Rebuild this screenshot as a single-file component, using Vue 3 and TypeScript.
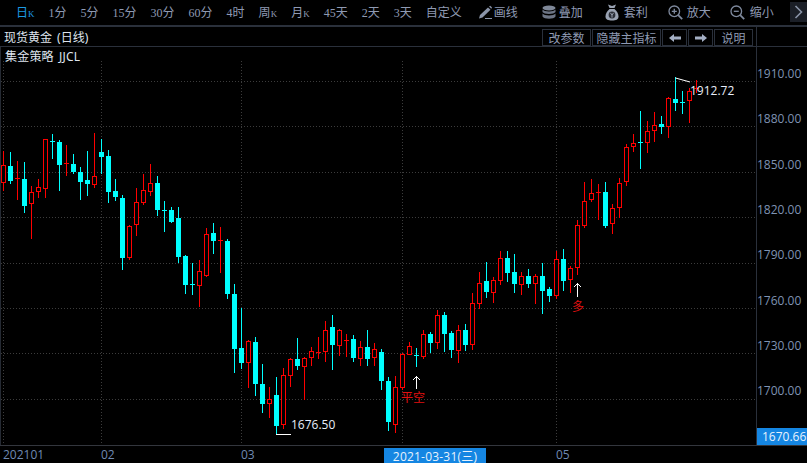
<script setup lang="ts">
// [isUp, high, bodyTop, bodyBottom, low], in chart pixels, oldest first
type Candle = [number, number, number, number, number];

const candles: Candle[] = [
  [1, 151, 165, 182, 191], [0, 152, 166, 180, 184], [1, 161, 178, 178, 200], [0, 162, 179, 205, 213],
  [1, 186, 192, 203, 239], [1, 179, 187, 191, 198], [1, 139, 139, 188, 198], [0, 134, 141, 141, 159],
  [0, 140, 142, 164, 191], [1, 145, 163, 163, 176], [0, 154, 164, 171, 174], [0, 167, 172, 181, 200],
  [0, 151, 180, 183, 196], [1, 133, 176, 184, 188], [0, 139, 152, 156, 174], [0, 150, 156, 191, 203],
  [0, 179, 191, 196, 201], [0, 195, 198, 257, 270], [1, 225, 226, 257, 260], [1, 188, 202, 224, 236],
  [1, 174, 190, 202, 205], [1, 164, 183, 191, 196], [0, 176, 183, 209, 216], [0, 201, 210, 210, 232],
  [0, 207, 210, 221, 223], [0, 207, 218, 256, 263], [0, 255, 256, 284, 294], [0, 263, 284, 284, 295],
  [1, 260, 271, 285, 307], [1, 228, 234, 275, 277], [0, 223, 233, 240, 254], [1, 227, 240, 240, 273],
  [0, 239, 241, 293, 299], [0, 284, 294, 348, 373], [0, 308, 348, 362, 369], [1, 340, 341, 362, 388],
  [0, 337, 342, 383, 396], [0, 364, 384, 403, 413], [1, 387, 399, 403, 418], [0, 377, 395, 425, 434],
  [1, 368, 375, 424, 429], [1, 358, 359, 375, 387], [0, 338, 359, 365, 370], [1, 357, 358, 366, 400],
  [1, 347, 351, 357, 366], [1, 337, 352, 352, 359], [1, 321, 330, 351, 362], [0, 315, 327, 344, 370],
  [1, 329, 330, 345, 356], [1, 334, 340, 340, 357], [0, 335, 339, 357, 362], [1, 341, 347, 358, 366],
  [0, 330, 347, 358, 366], [1, 343, 349, 357, 366], [0, 349, 352, 380, 390], [0, 377, 381, 421, 431],
  [1, 376, 387, 424, 433], [1, 353, 354, 387, 390], [1, 342, 346, 354, 354], [0, 348, 355, 355, 367],
  [1, 330, 334, 356, 359], [0, 332, 334, 342, 353], [1, 310, 315, 342, 349], [0, 312, 315, 333, 352],
  [0, 331, 333, 349, 358], [1, 325, 330, 350, 363], [0, 324, 330, 344, 351], [1, 293, 303, 344, 350],
  [1, 272, 283, 303, 309], [0, 262, 281, 291, 298], [1, 277, 280, 292, 303], [1, 251, 258, 280, 285],
  [0, 251, 258, 272, 282], [0, 254, 272, 283, 293], [1, 272, 276, 284, 295], [0, 269, 276, 283, 288],
  [1, 274, 276, 283, 304], [0, 263, 276, 290, 314], [0, 287, 289, 295, 302], [1, 251, 259, 295, 299],
  [0, 249, 259, 280, 291], [1, 266, 268, 279, 293], [1, 220, 225, 267, 275], [1, 182, 201, 225, 228],
  [1, 179, 193, 199, 202], [1, 184, 192, 192, 220], [0, 182, 192, 225, 228], [1, 204, 208, 223, 234],
  [1, 178, 183, 207, 218], [1, 144, 147, 181, 186], [1, 134, 143, 146, 152], [0, 111, 142, 142, 169],
  [1, 121, 131, 142, 153], [1, 112, 125, 130, 142], [0, 116, 124, 126, 134], [1, 97, 98, 126, 138],
  [0, 77, 99, 102, 111], [0, 91, 102, 102, 114], [1, 88, 91, 100, 123], [1, 80, 88, 88, 93],
];

const gridY = [81, 126, 172, 217, 263, 308, 353, 399];
const gridX = [3, 101, 241, 402, 556];
const prices = ['1910.00', '1880.00', '1850.00', '1820.00', '1790.00', '1760.00', '1730.00', '1700.00'];
const periodsA = ['1分', '5分', '15分', '30分', '60分', '4时'];
const periodsB = ['45天', '2天', '3天', '自定义'];
const months = [
  { label: '202101', left: 3 },
  { label: '02', left: 101 },
  { label: '03', left: 241 },
  { label: '05', left: 556 },
];
</script>

<template>
  <div class="screen">
    <div class="toolbar">
      <span class="period active">日<span class="k">K</span></span>
      <span v-for="p in periodsA" :key="p" class="period">{{ p }}</span>
      <span class="period">周<span class="k">K</span></span>
      <span class="period">月<span class="k">K</span></span>
      <span v-for="p in periodsB" :key="p" class="period">{{ p }}</span>

      <span class="tool tool-draw">
        <svg width="15" height="15" viewBox="0 0 15 15">
          <path d="M1 13.5 L2 10 L10 2.5 L12.5 4.8 L4.5 12.4 Z" fill="#8a94a8" />
          <path d="M11 1.5 L12.2 0.8 L14 2.6 L13.3 3.8 Z" fill="#8a94a8" />
          <rect x="7" y="13" width="7" height="1" fill="#8a94a8" />
        </svg>
        画线
      </span>
      <span class="tool tool-stack">
        <svg width="14" height="15" viewBox="0 0 14 15">
          <ellipse cx="7" cy="3" rx="6.5" ry="2.6" fill="#7f8898" />
          <path d="M0.5 4.5 C2 7 12 7 13.5 4.5 V7 C12 9.5 2 9.5 0.5 7 Z" fill="#6d7585" />
          <path d="M0.5 8.5 C2 11 12 11 13.5 8.5 V11.5 C12 14.5 2 14.5 0.5 11.5 Z" fill="#6d7585" />
        </svg>
        叠加
      </span>
      <span class="tool tool-bag">
        <svg width="14" height="17" viewBox="0 0 14 17">
          <path d="M3 0.5 L7 2 L11 0.5 L9.5 4 H4.5 Z" fill="#9aa3b3" />
          <path d="M4.5 5 H9.5 C12 7 13.5 10 13.5 12.5 C13.5 15.5 11 16.5 7 16.5 C3 16.5 0.5 15.5 0.5 12.5 C0.5 10 2 7 4.5 5 Z" fill="#9aa3b3" />
          <circle cx="7" cy="11" r="3.4" fill="#2b2f38" />
          <path d="M5.4 8.8 L7 11 L8.6 8.8 M7 11 V13.6" stroke="#9aa3b3" stroke-width="1" fill="none" />
        </svg>
        套利
      </span>
      <span class="tool tool-in">
        <svg width="15" height="15" viewBox="0 0 15 15" fill="none" stroke="#7f8a9e" stroke-width="1.3">
          <circle cx="6.3" cy="6.3" r="5.3" />
          <path d="M10.2 10.2 L14.2 14.2" stroke-width="1.8" />
          <path d="M3.8 6.3 H8.8 M6.3 3.8 V8.8" />
        </svg>
        放大
      </span>
      <span class="tool tool-out">
        <svg width="15" height="15" viewBox="0 0 15 15" fill="none" stroke="#7f8a9e" stroke-width="1.3">
          <circle cx="6.3" cy="6.3" r="5.3" />
          <path d="M10.2 10.2 L14.2 14.2" stroke-width="1.8" />
          <path d="M3.8 6.3 H8.8" />
        </svg>
        缩小
      </span>
      <span class="more">
        <svg width="9" height="14" viewBox="0 0 9 14" fill="none" stroke="#8a94a8" stroke-width="1.6">
          <path d="M1.5 1 L7.5 7 L1.5 13" />
        </svg>
      </span>
    </div>

    <div class="title-row">
      <div class="title-main">
        <span class="title">现货黄金 (日线)</span>
        <div class="btn-group">
          <span class="btn btn-param">改参数</span>
          <span class="btn btn-hide">隐藏主指标</span>
          <span class="btn btn-arrow">
            <svg width="12" height="8" viewBox="0 0 12 8"><path d="M0 4 L5 0 V2.5 H12 V5.5 H5 V8 Z" fill="#a4afc4" /></svg>
          </span>
          <span class="btn btn-arrow">
            <svg width="12" height="8" viewBox="0 0 12 8"><path d="M12 4 L7 0 V2.5 H0 V5.5 H7 V8 Z" fill="#a4afc4" /></svg>
          </span>
          <span class="btn btn-help">说明</span>
        </div>
      </div>
      <div class="title-side"></div>
    </div>

    <div class="main">
      <div class="chart">
        <div class="indicator">集金策略 JJCL</div>
        <svg class="plot" width="756" height="398" viewBox="0 47 756 398">
          <line
            v-for="y in gridY"
            :key="'h' + y"
            x1="1"
            x2="756"
            :y1="y + 0.5"
            :y2="y + 0.5"
            class="grid"
          />
          <line
            v-for="x in gridX"
            :key="'v' + x"
            :x1="x + 0.5"
            :x2="x + 0.5"
            y1="61"
            y2="445"
            class="grid"
          />

          <g v-for="(c, i) in candles" :key="i" :class="c[0] ? 'up' : 'down'">
            <rect class="wick" :x="3 + 7 * i" :y="c[1]" width="1" :height="c[4] - c[1]" />
            <rect
              v-if="c[2] === c[3]"
              class="wick"
              :x="1 + 7 * i"
              :y="c[2]"
              width="5"
              height="1"
            />
            <rect
              v-else-if="c[0]"
              class="hollow"
              :x="1.5 + 7 * i"
              :y="c[2] + 0.5"
              width="4"
              :height="c[3] - c[2]"
            />
            <rect
              v-else
              class="wick"
              :x="1 + 7 * i"
              :y="c[2]"
              width="5"
              :height="c[3] - c[2] + 1"
            />
          </g>

          <path class="mark" d="M276 434.5 H291" />
          <path class="mark thin" d="M675.5 78 L690 82" />
          <text class="value" x="291" y="429">1676.50</text>
          <text class="value" x="690" y="95">1912.72</text>

          <path class="mark" d="M416.5 389 V376.5 M412.5 380.5 L416.5 376.5 L420.5 380.5" />
          <text class="signal" x="401" y="402">平空</text>
          <path class="mark" d="M577.5 297 V283.5 M573.5 287.5 L577.5 283.5 L581.5 287.5" />
          <text class="signal" x="572" y="311">多</text>
        </svg>
      </div>
      <div class="axis">
        <span v-for="p in prices" :key="p" class="price">{{ p }}</span>
        <span class="last-price">1670.66</span>
      </div>
    </div>

    <div class="timeline">
      <span v-for="m in months" :key="m.label" class="month" :style="{ left: m.left + 'px' }">{{ m.label }}</span>
      <span class="cursor-date">2021-03-31(三)</span>
    </div>
  </div>
</template>

<style>
html,
body {
  margin: 0;
  background: #000;
}
</style>

<style scoped>
.screen {
  width: 807px;
  height: 463px;
  overflow: hidden;
  display: flex;
  flex-direction: column;
  background: #000;
  font-family: "Liberation Serif", "Noto Sans CJK SC", serif;
  font-size: 12px;
  color: #8f9ab3;
}

.toolbar {
  height: 24px;
  flex: none;
  display: flex;
  align-items: center;
  gap: 14px;
  padding-left: 16px;
  padding-bottom: 1px;
  border-bottom: 2px solid #2a303b;
}

.period {
  white-space: nowrap;
}

.period .k {
  font-size: 9px;
}

.period.active {
  color: #1c9ae6;
}

.tool {
  display: flex;
  align-items: center;
  gap: 3px;
  white-space: nowrap;
}

.tool-draw {
  margin-left: 2px;
  gap: 1px;
}

.tool-stack {
  margin-left: 10px;
}

.tool-bag {
  margin-left: 8px;
  gap: 5px;
}

.tool-in {
  margin-left: 6px;
  gap: 4px;
}

.tool-out {
  margin-left: 5px;
  gap: 5px;
}

.more {
  width: 18px;
  height: 20px;
  margin-left: 2px;
  display: flex;
  align-items: center;
  justify-content: center;
  background: #1b1f27;
}

.title-row {
  height: 19px;
  flex: none;
  display: flex;
  border-bottom: 1px solid #2a303b;
}

.title-main {
  width: 756px;
  display: flex;
  align-items: center;
  justify-content: space-between;
  padding-left: 4px;
  padding-right: 3px;
  box-sizing: border-box;
}

.title {
  padding-top: 1px;
  word-spacing: 2px;
  color: #dfe4ee;
  font-family: "Noto Sans", "Noto Sans CJK SC", sans-serif;
}

.btn-group {
  display: flex;
  height: 17px;
  margin-top: 2px;
  gap: 1px;
}

.btn {
  box-sizing: border-box;
  height: 17px;
  display: flex;
  align-items: center;
  justify-content: center;
  border: 1px solid #2a303b;
  color: #8f9ab3;
}

.btn-param {
  width: 49px;
}

.btn-hide {
  width: 69px;
}

.btn-arrow {
  width: 25px;
}

.btn-help {
  width: 39px;
}

.title-side {
  flex: 1;
  border-left: 1px solid #2a303b;
}

.main {
  height: 398px;
  flex: none;
  display: flex;
  border-bottom: 1px solid #33363d;
}

.chart {
  position: relative;
  width: 756px;
  flex: none;
  border-left: 1px solid #252a33;
  box-sizing: border-box;
}

.plot {
  display: block;
  margin-left: -1px;
  shape-rendering: crispEdges;
}

.indicator {
  position: absolute;
  top: 0;
  left: 4px;
  word-spacing: 2px;
  letter-spacing: 0.2px;
  color: #dfe4ee;
  font-family: "Noto Sans", "Noto Sans CJK SC", sans-serif;
}

.grid {
  stroke: #3c3c3c;
  stroke-width: 1;
  stroke-dasharray: 1 2;
}

.up .wick {
  fill: #ff0000;
}

.down .wick {
  fill: #00ffff;
}

.hollow {
  fill: #000;
  stroke: #ff0000;
  stroke-width: 1;
}

.mark {
  fill: none;
  stroke: #fff;
  stroke-width: 1;
}

.mark.thin {
  shape-rendering: auto;
}

.value {
  fill: #e8eefa;
  font-family: "Open Sans", sans-serif;
  font-size: 12px;
  shape-rendering: auto;
}

.signal {
  fill: #e01010;
  font-family: "Noto Sans CJK SC", sans-serif;
  font-size: 12px;
}

.axis {
  position: relative;
  flex: 1;
  display: flex;
  flex-direction: column;
  padding-top: 4px;
  border-left: 1px solid #2a303b;
}

.price {
  height: 45.33px;
  line-height: 45.33px;
  font-family: "Open Sans", sans-serif;
  font-size: 12px;
  color: #7f93b3;
}

.last-price {
  position: absolute;
  left: 0;
  right: 0;
  bottom: 0;
  height: 17px;
  line-height: 17px;
  padding-left: 5px;
  background: #1586e2;
  color: #e8f2fd;
  font-family: "Open Sans", sans-serif;
  font-size: 12px;
}

.timeline {
  position: relative;
  flex: 1;
}

.month {
  position: absolute;
  top: 0;
  line-height: 17px;
  font-family: "Open Sans", sans-serif;
  font-size: 12px;
  color: #6f8ab3;
}

.cursor-date {
  position: absolute;
  left: 384px;
  top: 2px;
  width: 102px;
  height: 15px;
  line-height: 18px;
  text-align: center;
  letter-spacing: 0.2px;
  overflow: hidden;
  background: #1586e2;
  color: #e8f2fd;
  font-family: "Open Sans", "Noto Sans CJK SC", sans-serif;
  font-size: 12px;
}
</style>
